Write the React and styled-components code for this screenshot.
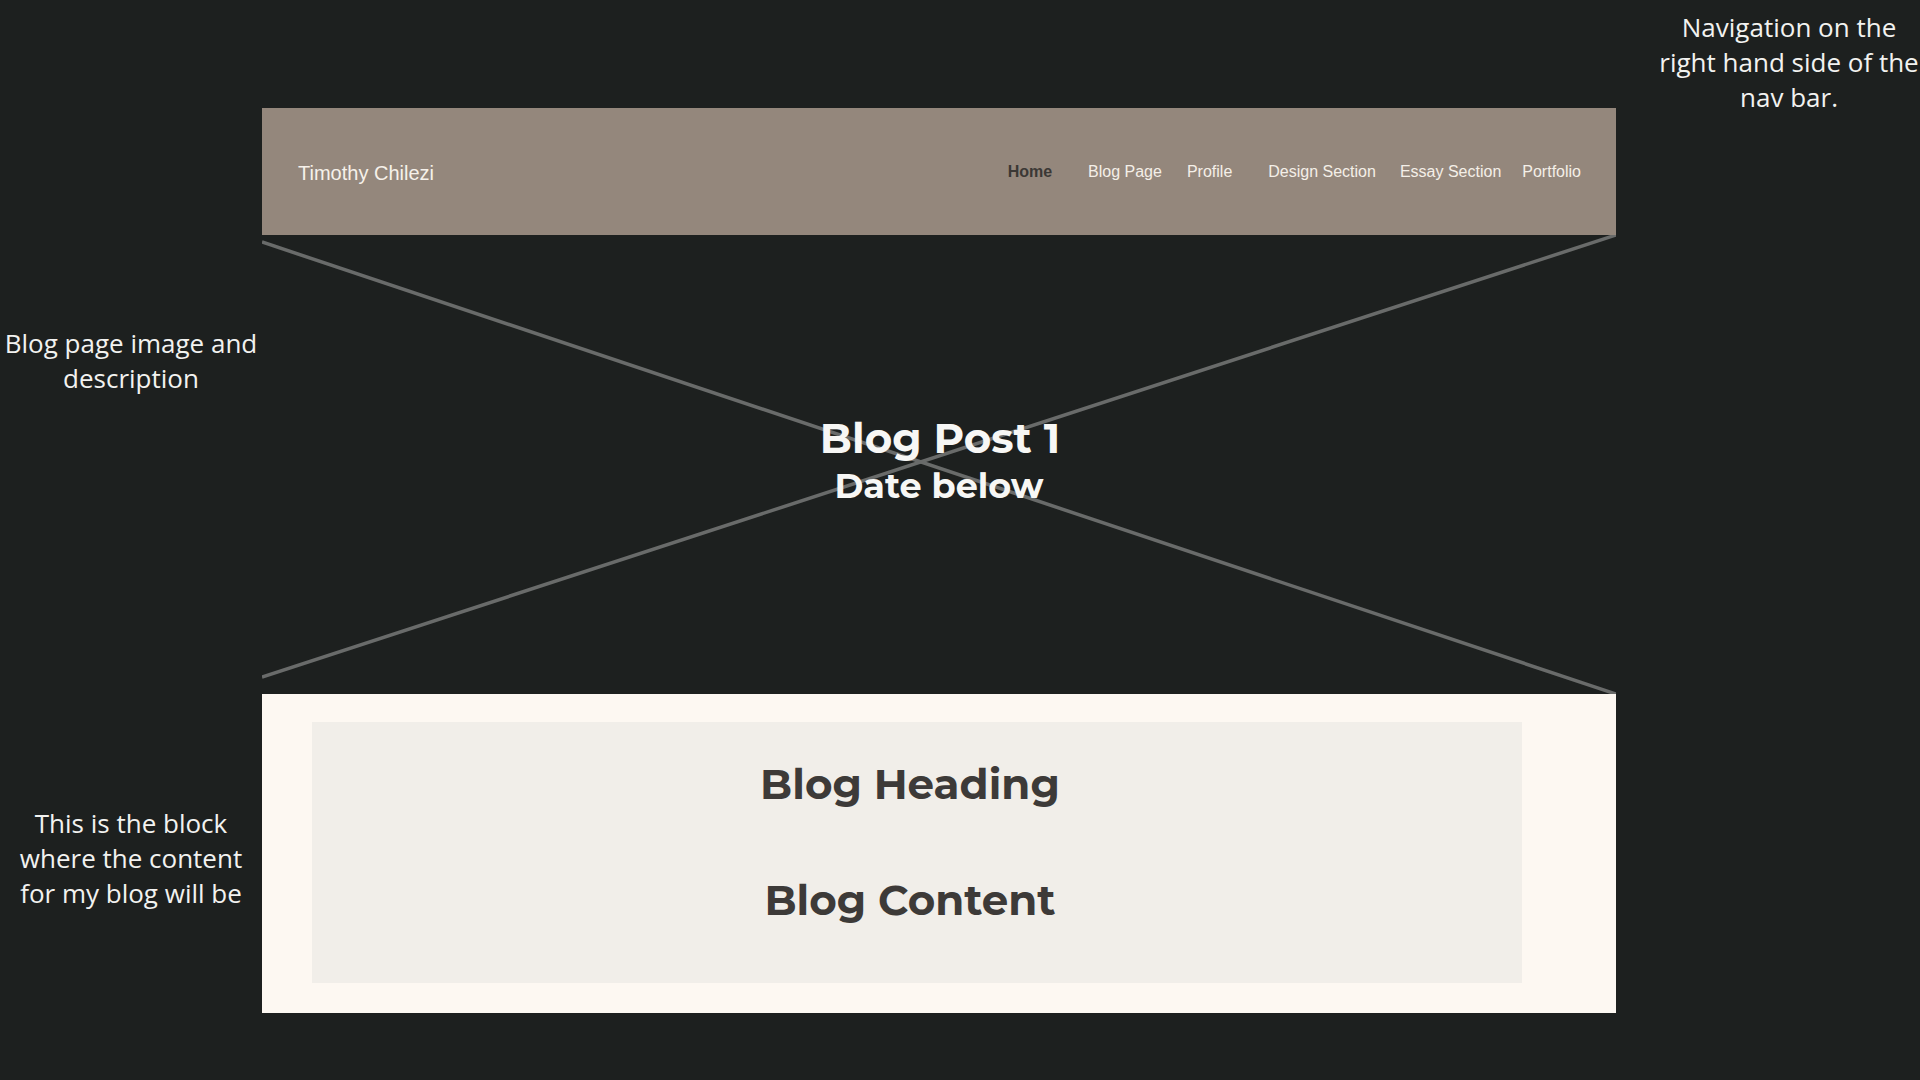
import React from 'react';
import styled, { createGlobalStyle } from 'styled-components';

const GlobalStyle = createGlobalStyle`
  html, body {
    margin: 0;
    padding: 0;
    background: #1d201f;
    overflow: hidden;
  }
`;

const Page = styled.div`
  width: 1920px;
  height: 1080px;
  display: grid;
  grid-template-columns: 262px 1354px 1fr;
  grid-template-rows: 108px 127px 459px 319px 1fr;
  background: #1d201f;
`;

const Note = styled.div`
  font-family: 'Open Sans', 'Noto Sans', sans-serif;
  font-size: 26px;
  line-height: 35px;
  color: #f2f2f0;
  text-align: center;
  white-space: nowrap;
  grid-column: ${(p) => p.col};
  grid-row: ${(p) => p.row};
  align-self: ${(p) => p.align || 'start'};
  padding-top: ${(p) => p.top || 0}px;
  margin-left: ${(p) => p.shift || 0}px;
  width: ${(p) => p.w || 262}px;
`;

const NavBar = styled.nav`
  grid-column: 2;
  grid-row: 2;
  background: #94877c;
  display: flex;
  align-items: center;
  justify-content: space-between;
  padding: 0 35px 0 36px;
  font-family: 'Liberation Sans', Arial, sans-serif;
`;

const Brand = styled.div`
  font-size: 20px;
  color: #f6f1ea;
  padding-top: 3px;
`;

const Links = styled.ul`
  display: flex;
  align-items: center;
  list-style: none;
  margin: 0;
  padding: 0;
`;

const LinkItem = styled.li`
  font-size: 16px;
  margin-left: ${(p) => p.space}px;
  color: ${(p) => (p.active ? '#3b3835' : '#f4efe8')};
  font-weight: ${(p) => (p.active ? 700 : 400)};
`;

const Hero = styled.section`
  grid-column: 2;
  grid-row: 3;
  position: relative;
  display: flex;
  flex-direction: column;
  align-items: center;
  justify-content: center;
  padding-bottom: 9px;
  font-family: 'Montserrat', 'Open Sans', sans-serif;
  color: #f7f7f5;
`;

const Cross = styled.svg`
  position: absolute;
  inset: 0;
  width: 100%;
  height: 100%;
`;

const HeroTitle = styled.h1`
  position: relative;
  margin: 0;
  font-size: 42px;
  line-height: 52px;
  font-weight: 700;
  padding-left: 2px;
`;

const HeroDate = styled.h2`
  position: relative;
  margin: 0;
  font-size: 35px;
  line-height: 44px;
  font-weight: 700;
`;

const ContentBlock = styled.section`
  grid-column: 2;
  grid-row: 4;
  background: #fdf8f2;
  padding: 28px 94px 30px 50px;
  display: flex;
`;

const ContentInner = styled.div`
  flex: 1;
  background: #f1eee9;
  display: flex;
  flex-direction: column;
  align-items: center;
  padding: 35px 14px 0 0;
  gap: 62px;
`;

const BlockTitle = styled.h3`
  margin: 0;
  font-family: 'Montserrat', 'Open Sans', sans-serif;
  font-size: 42px;
  line-height: 54px;
  font-weight: 700;
  color: #3d3a38;
`;

export default function App() {
  return (
    <>
      <GlobalStyle />
      <Page>
        <Note col="3" row="1 / 3" top={10} shift={23} w={300}>
          Navigation on the
          <br />
          right hand side of the
          <br />
          nav bar.
        </Note>

        <NavBar>
          <Brand>Timothy Chilezi</Brand>
          <Links>
            <LinkItem active space={0}>Home</LinkItem>
            <LinkItem space={36}>Blog Page</LinkItem>
            <LinkItem space={25}>Profile</LinkItem>
            <LinkItem space={36}>Design Section</LinkItem>
            <LinkItem space={24}>Essay Section</LinkItem>
            <LinkItem space={21}>Portfolio</LinkItem>
          </Links>
        </NavBar>

        <Note col="1" row="3" top={91}>
          Blog page image and
          <br />
          description
        </Note>

        <Hero>
          <Cross viewBox="0 0 1354 459" preserveAspectRatio="none">
            <line x1="0" y1="7" x2="1354" y2="459" stroke="#696b6a" strokeWidth="3.5" />
            <line x1="0" y1="442" x2="1354" y2="0" stroke="#696b6a" strokeWidth="3.5" />
          </Cross>
          <HeroTitle>Blog Post 1</HeroTitle>
          <HeroDate>Date below</HeroDate>
        </Hero>

        <Note col="1" row="4" align="center" top={9}>
          This is the block
          <br />
          where the content
          <br />
          for my blog will be
        </Note>

        <ContentBlock>
          <ContentInner>
            <BlockTitle>Blog Heading</BlockTitle>
            <BlockTitle>Blog Content</BlockTitle>
          </ContentInner>
        </ContentBlock>
      </Page>
    </>
  );
}
